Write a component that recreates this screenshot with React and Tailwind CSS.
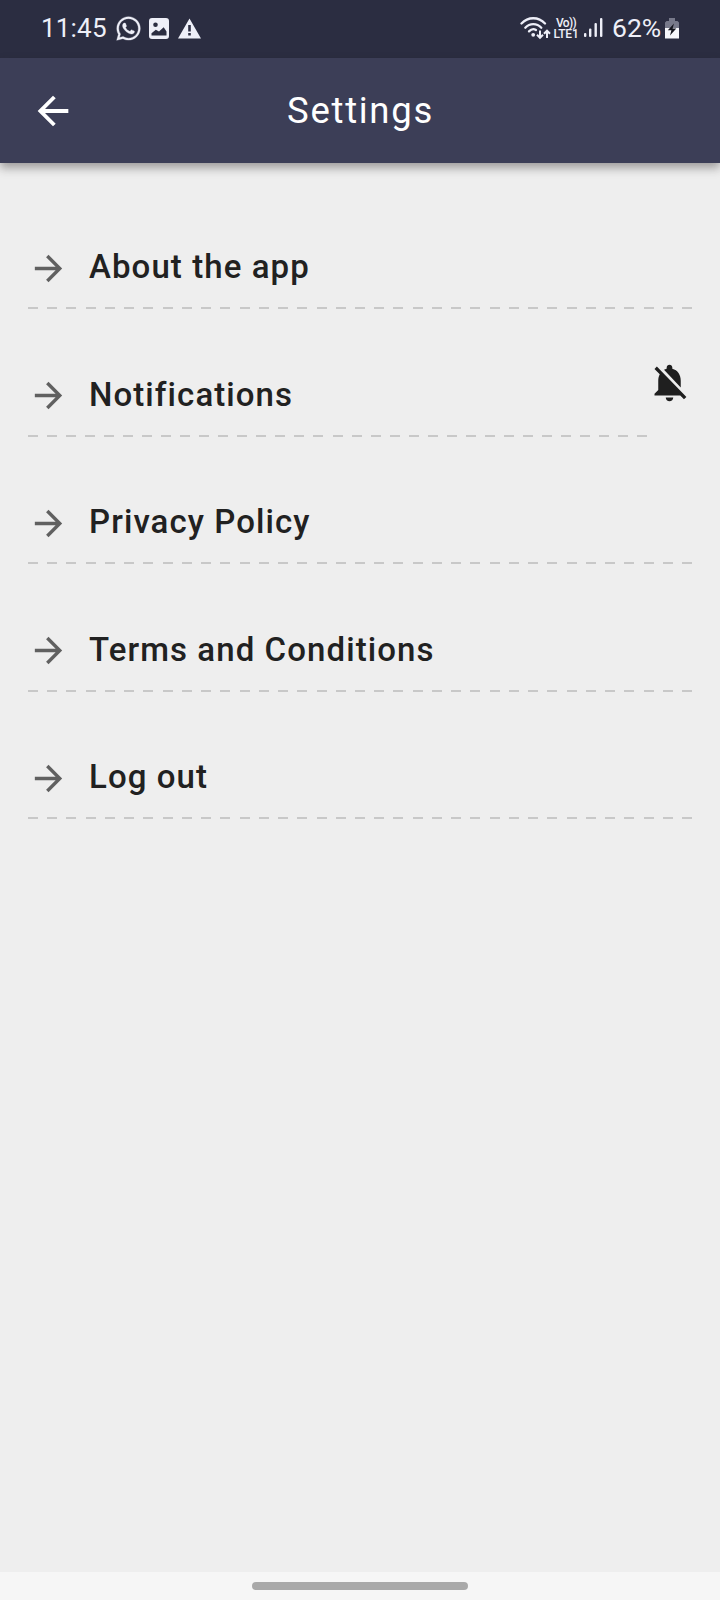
import React from 'react'
import { FaWhatsapp } from 'react-icons/fa'

const items = [
  { label: 'About the app', dashes: 35 },
  { label: 'Notifications', dashes: 33, muted: true },
  { label: 'Privacy Policy', dashes: 35 },
  { label: 'Terms and Conditions', dashes: 35 },
  { label: 'Log out', dashes: 35 },
]

function PhotoIcon() {
  return (
    <svg className="ml-[7px] h-[21px] w-5" viewBox="0 0 20 21">
      <path
        fill="currentColor"
        fillRule="evenodd"
        d="M3 0h14a3 3 0 0 1 3 3v15a3 3 0 0 1-3 3H3a3 3 0 0 1-3-3V3a3 3 0 0 1 3-3zM6.500 4.500a2.300 2.300 0 1 0 0 4.600 2.300 2.300 0 0 0 0-4.600zM2.500 17.500h15v-4l-2.800-4.200-4.700 4.200-3.200-1.800-4.300 3.500z"
      />
    </svg>
  )
}

function WarningIcon() {
  return (
    <svg className="ml-[9px] h-[21px] w-[23px]" viewBox="0 0 23 21">
      <path
        fill="currentColor"
        fillRule="evenodd"
        d="M11.500 0.500L23 20.500H0zM10.200 7v6.500h2.600V7zM10.200 15v2.600h2.600V15z"
      />
    </svg>
  )
}

function WifiIcon() {
  return (
    <svg className="h-6 w-[31px]" viewBox="0 0 31 24" fill="none" stroke="currentColor">
      <g strokeWidth="2.300" strokeLinecap="round">
        <path d="M1.500 7.500C8 .5 18.500 .5 25 7.500" />
        <path d="M5.300 11.700c4.500-4.800 11.500-4.800 16 0" />
        <path d="M9 15.400c2.300-2.400 5-2.600 7-1.400" />
      </g>
      <circle cx="13.200" cy="18.800" r="1.900" fill="currentColor" stroke="none" />
      <g strokeWidth="2">
        <path d="M20 14.500v7M17 18.800l3 3 3-3" />
        <path d="M27 22V15M24 17.700l3-3 3 3" />
      </g>
    </svg>
  )
}

function SignalIcon() {
  return (
    <svg className="ml-[5px] h-5 w-5" viewBox="0 0 20 20" fill="currentColor">
      <rect x="0" y="15" width="2.400" height="4" rx="1" />
      <rect x="5" y="10.500" width="2.400" height="8.500" rx="1" />
      <rect x="10.500" y="5" width="2.400" height="14" rx="1" />
      <rect x="16" y="0" width="2.400" height="19" rx="1" />
    </svg>
  )
}

function BatteryIcon() {
  return (
    <svg className="h-[21px] w-[14px]" viewBox="0 0 14 21">
      <path fill="#77798a" d="M4 0h6v3h2.500L14 4.500V10H0V4.500L1.500 3H4z" />
      <path fill="#f7f7fb" d="M0 10h14v10.500H0z" />
      <path fill="#15161f" d="M9 5.500L2.800 12.300h3.600L5 17.500l6.300-7H7.600z" />
    </svg>
  )
}

function StatusBar() {
  return (
    <div className="flex h-[58px] items-center justify-between bg-[#2b2d41] pr-[41px] pl-[41px] pb-[2px] text-[#eeeff8]">
      <div className="flex items-center">
        <span className="w-[67px] text-[26px] leading-none tracking-[0.200px]">11:45</span>
        <FaWhatsapp className="ml-[7px] h-[27px] w-[27px] stroke-current stroke-[6]" />
        <PhotoIcon />
        <WarningIcon />
      </div>
      <div className="flex items-center">
        <WifiIcon />
        <div className="ml-[2px] flex w-[26px] flex-col items-center pt-[2px] text-[12px] leading-[11px] font-medium">
          <span className="tracking-[-0.700px]">Vo))</span>
          <span className="tracking-[-0.200px]">LTE1</span>
        </div>
        <SignalIcon />
        <span className="ml-[8px] w-[53px] text-[26.500px] leading-none">62%</span>
        <BatteryIcon />
      </div>
    </div>
  )
}

function ArrowForward() {
  return (
    <svg className="h-[41px] w-[41px] shrink-0" viewBox="0 0 24 24" fill="#606060">
      <path d="M12 4l-1.410 1.410L16.170 11H4v2h12.170l-5.580 5.590L12 20l8-8z" />
    </svg>
  )
}

function DashedLine({ count }) {
  return (
    <div className="flex h-[2px] justify-between">
      {Array.from({ length: count }, (_, i) => (
        <span key={i} className="w-[10px] bg-[#c8c8c8]" />
      ))}
    </div>
  )
}

function SettingsRow({ label, dashes, muted }) {
  return (
    <div className="flex h-[109.700px] items-center">
      <div className="flex h-full flex-1 flex-col justify-end">
        <div className="mb-[18.500px] flex items-center">
          <ArrowForward />
          <span className="ml-[20px] pb-[3px] text-[33px] leading-[37px] font-medium tracking-[1.080px] text-[#212121]">
            {label}
          </span>
        </div>
        <DashedLine count={dashes} />
      </div>
      {muted && (
        <svg className="mt-px h-[45px] w-[45px]" viewBox="0 0 24 24" fill="#1f1f1f">
          <path d="M20 18.690L7.840 6.140 5.270 3.490 4 4.760l2.800 2.800v.01c-.52.99-.8 2.160-.8 3.420v5l-2 2v1h13.730l2 2L21 19.720l-1-1.030zM12 22c1.110 0 2-.89 2-2h-4c0 1.110.89 2 2 2zm6-7.320V11c0-3.080-1.640-5.640-4.500-6.320V4c0-.83-.67-1.500-1.500-1.500s-1.500.67-1.500 1.500v.68c-.15.03-.29.08-.42.12-.1.03-.2.07-.3.110h-.01c-.01 0-.01 0-.02.01-.23.09-.46.2-.68.310 0 0-.01 0-.01.01L18 14.680z" />
        </svg>
      )}
    </div>
  )
}

export default function App() {
  return (
    <div className="flex h-[1600px] w-[720px] flex-col overflow-hidden bg-[#eeeeee] font-[Roboto,sans-serif]">
      <StatusBar />
      <header className="grid h-[105px] grid-cols-[1fr_auto_1fr] items-center bg-[#3c3e57] pl-[30px] text-white shadow-[0_5px_9px_rgba(40,35,35,0.4)]">
        <svg className="h-[46px] w-[46px]" viewBox="0 0 24 24" fill="currentColor">
          <path d="M20 11H7.830l5.590-5.590L12 4l-8 8 8 8 1.410-1.410L7.830 13H20v-2z" />
        </svg>
        <h1 className="mr-[29px] pt-px text-[36.500px] leading-none tracking-[1.700px]">Settings</h1>
      </header>
      <main className="flex flex-1 flex-col gap-[17.800px] px-[28px] pt-[36.700px]">
        {items.map((item) => (
          <SettingsRow key={item.label} {...item} />
        ))}
      </main>
      <footer className="flex h-[28px] items-center justify-center bg-[#f6f6f6]">
        <div className="h-[8px] w-[216px] rounded-full bg-[#a9a9a9]" />
      </footer>
    </div>
  )
}
